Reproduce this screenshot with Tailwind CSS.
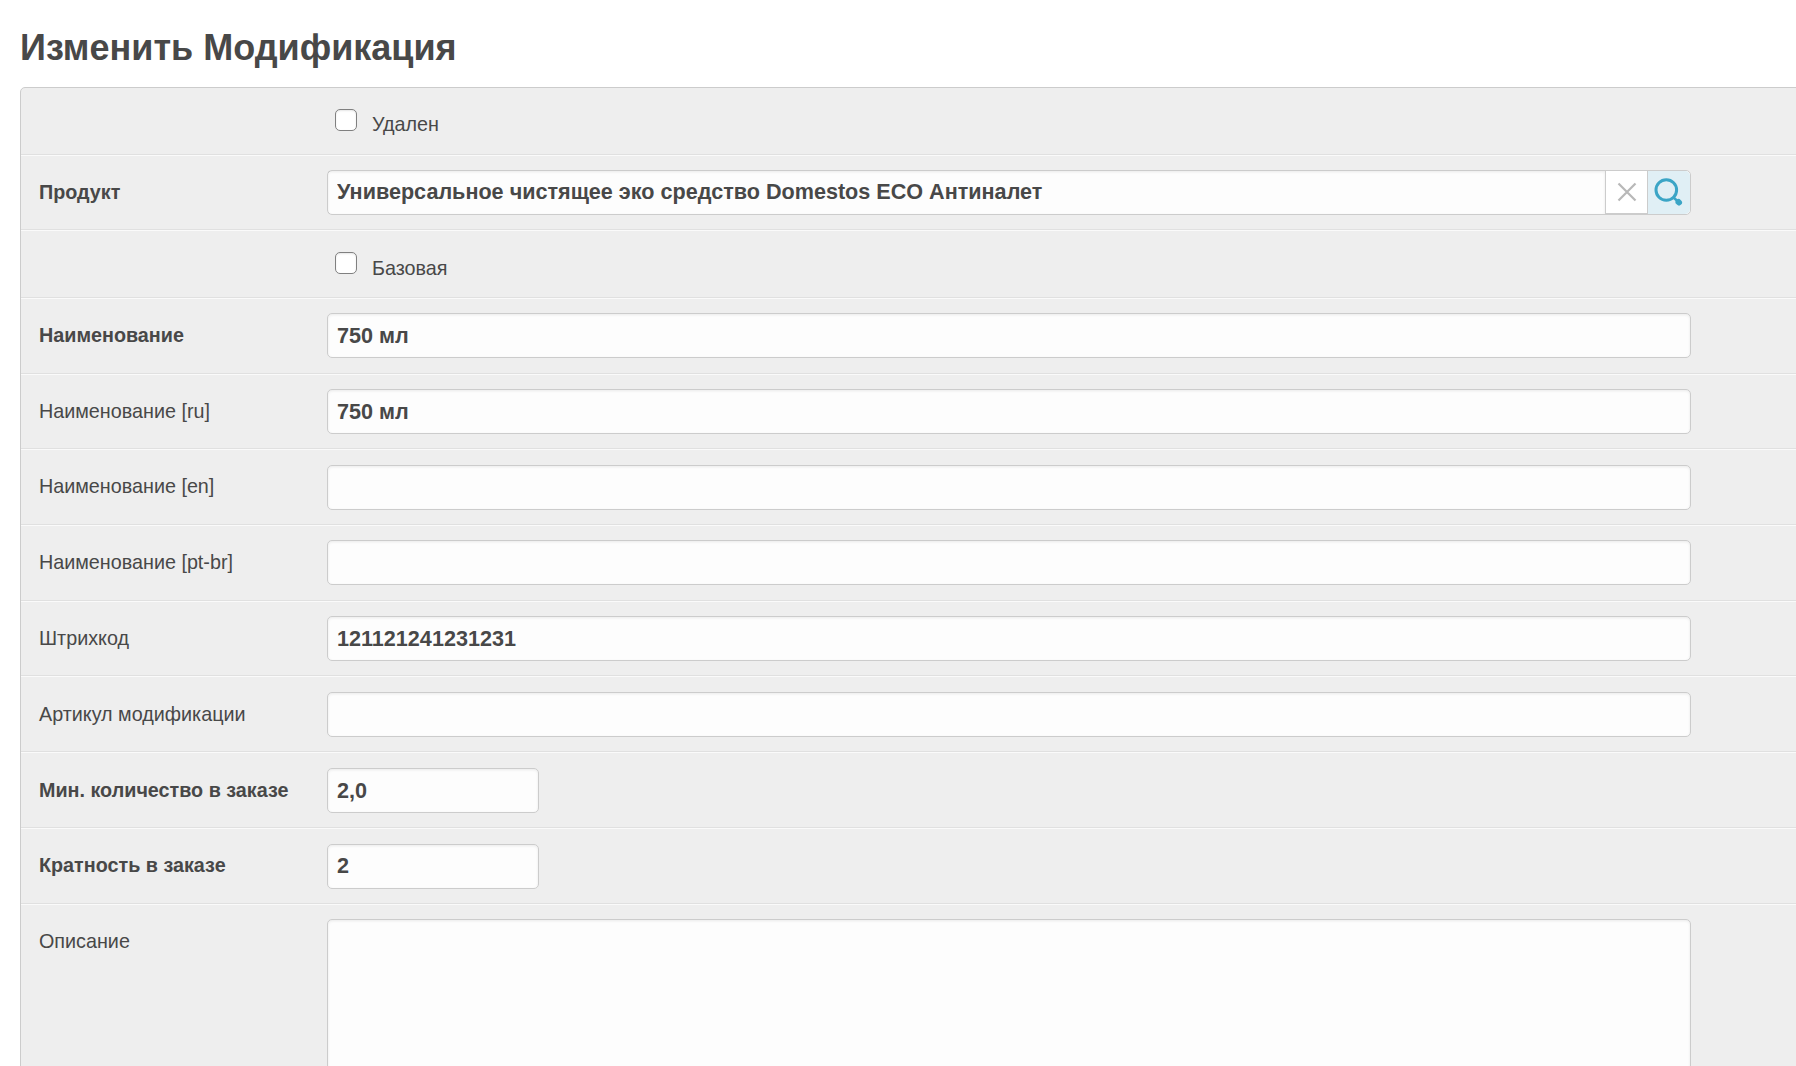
<!DOCTYPE html>
<html lang="ru">
<head>
    <meta charset="UTF-8">
    <title>Изменить Модификация</title>
    <script src="https://cdn.jsdelivr.net/npm/@tailwindcss/browser@4"></script>
</head>
<body class="h-screen overflow-hidden bg-white font-['Liberation_Sans',Arial,sans-serif] text-[#484848] text-[19.750px]">
    <h1 class="pl-[20px] h-[87px] pt-[26px] text-[36px] leading-[44px] font-bold">Изменить Модификация</h1>
    <form class="ml-[20px] w-[1800px] bg-[#eee] border border-[#ccc] rounded-tl-[5px]">
        <!-- checkbox row -->
        <div class="h-[67px] pl-[314px] flex items-center gap-[15px] border-b border-b-[#e0e0e0] shadow-[0_1px_0_#fafafa]">
            <input type="checkbox" class="appearance-none w-[22px] h-[22px] -mt-[2px] bg-white border border-[#808080] rounded-[5px] shadow-[inset_0_1px_2px_rgba(0,0,0,0.1)]">
            <label class="pt-[8px]">Удален</label>
        </div>
        <div class="h-[75px] px-[18px] flex items-center border-b border-b-[#e0e0e0] shadow-[0_1px_0_#fafafa]">
            <label class="w-[288px] pt-[2px] font-bold">Продукт</label>
            <div class="w-[1364px] h-[45px] flex bg-[#fdfdfd] border border-[#ccc] rounded-[5px]">
                <input type="text" value="Универсальное чистящее эко средство Domestos ECO Антиналет" class="flex-1 min-w-0 px-[9px] text-[21.600px] font-bold outline-none bg-transparent shadow-[inset_0_1px_3px_rgba(0,0,0,0.08)]">
                <span class="w-[43px] flex items-center justify-center bg-white border-l border-b border-r border-[#ccc]">
                    <svg width="20" height="20" viewBox="0 0 20 20" fill="none" stroke="#b8b8b8" stroke-width="2.200"><path d="M1.500 1.500l17 17M18.500 1.500l-17 17"/></svg>
                </span>
                <span class="w-[42px] flex items-center justify-center bg-[#e0eff5] rounded-r-[5px]">
                    <svg width="30" height="30" viewBox="0 0 30 30" fill="none" stroke="#3ba5c6" stroke-linecap="round"><circle cx="12.300" cy="13" r="10.300" stroke-width="3"/><path d="M19.500 20.500l5 4.500" stroke-width="2.500"/><path d="M24.500 25l.5.500" stroke-width="6"/></svg>
                </span>
            </div>
        </div>
        <div class="h-[68px] pl-[314px] flex items-center gap-[15px] border-b border-b-[#e0e0e0] shadow-[0_1px_0_#fafafa]">
            <input type="checkbox" class="appearance-none w-[22px] h-[22px] -mt-[1px] bg-white border border-[#808080] rounded-[5px] shadow-[inset_0_1px_2px_rgba(0,0,0,0.1)]">
            <label class="pt-[10px]">Базовая</label>
        </div>
        <!-- text rows -->
        <div class="h-[75.700px] px-[18px] pt-[1px] flex items-center border-b border-b-[#e0e0e0] shadow-[0_1px_0_#fafafa]">
            <label class="w-[288px] font-bold">Наименование</label>
            <input type="text" value="750 мл" class="w-[1364px] h-[45px] px-[9px] pt-[1px] text-[21.600px] font-bold bg-[#fdfdfd] border border-[#ccc] rounded-[5px] outline-none shadow-[inset_0_1px_3px_rgba(0,0,0,0.08)]">
        </div>
        <div class="h-[75.700px] px-[18px] pt-[1px] flex items-center border-b border-b-[#e0e0e0] shadow-[0_1px_0_#fafafa]">
            <label class="w-[288px]">Наименование [ru]</label>
            <input type="text" value="750 мл" class="w-[1364px] h-[45px] px-[9px] text-[21.600px] font-bold bg-[#fdfdfd] border border-[#ccc] rounded-[5px] outline-none shadow-[inset_0_1px_3px_rgba(0,0,0,0.08)]">
        </div>
        <div class="h-[75.700px] px-[18px] pt-[1px] flex items-center border-b border-b-[#e0e0e0] shadow-[0_1px_0_#fafafa]">
            <label class="w-[288px]">Наименование [en]</label>
            <input type="text" class="w-[1364px] h-[45px] px-[9px] text-[21.600px] font-bold bg-[#fdfdfd] border border-[#ccc] rounded-[5px] outline-none shadow-[inset_0_1px_3px_rgba(0,0,0,0.08)]">
        </div>
        <div class="h-[75.700px] px-[18px] pt-[1px] flex items-center border-b border-b-[#e0e0e0] shadow-[0_1px_0_#fafafa]">
            <label class="w-[288px]">Наименование [pt-br]</label>
            <input type="text" class="w-[1364px] h-[45px] px-[9px] text-[21.600px] font-bold bg-[#fdfdfd] border border-[#ccc] rounded-[5px] outline-none shadow-[inset_0_1px_3px_rgba(0,0,0,0.08)]">
        </div>
        <div class="h-[75.700px] px-[18px] pt-[1px] flex items-center border-b border-b-[#e0e0e0] shadow-[0_1px_0_#fafafa]">
            <label class="w-[288px]">Штрихкод</label>
            <input type="text" value="121121241231231" class="w-[1364px] h-[45px] px-[9px] text-[21.600px] font-bold bg-[#fdfdfd] border border-[#ccc] rounded-[5px] outline-none shadow-[inset_0_1px_3px_rgba(0,0,0,0.08)]">
        </div>
        <div class="h-[75.700px] px-[18px] pt-[2px] flex items-center border-b border-b-[#e0e0e0] shadow-[0_1px_0_#fafafa]">
            <label class="w-[288px]">Артикул модификации</label>
            <input type="text" class="w-[1364px] h-[45px] px-[9px] text-[21.600px] font-bold bg-[#fdfdfd] border border-[#ccc] rounded-[5px] outline-none shadow-[inset_0_1px_3px_rgba(0,0,0,0.08)]">
        </div>
        <div class="h-[75.700px] px-[18px] pt-[3px] flex items-center border-b border-b-[#e0e0e0] shadow-[0_1px_0_#fafafa]">
            <label class="w-[288px] font-bold">Мин. количество в заказе</label>
            <input type="text" value="2,0" class="w-[212px] h-[45px] px-[9px] text-[21.600px] font-bold bg-[#fdfdfd] border border-[#ccc] rounded-[5px] outline-none shadow-[inset_0_1px_3px_rgba(0,0,0,0.08)]">
        </div>
        <div class="h-[75.700px] px-[18px] pt-[3px] flex items-center border-b border-b-[#e0e0e0] shadow-[0_1px_0_#fafafa]">
            <label class="w-[288px] pb-[2px] font-bold">Кратность в заказе</label>
            <input type="text" value="2" class="w-[212px] h-[45px] px-[9px] pb-[2px] text-[21.600px] font-bold bg-[#fdfdfd] border border-[#ccc] rounded-[5px] outline-none shadow-[inset_0_1px_3px_rgba(0,0,0,0.08)]">
        </div>
        <div class="h-[300px] px-[18px] pt-[15px] flex items-start">
            <label class="w-[288px] pt-[8px]">Описание</label>
            <textarea class="w-[1364px] h-[260px] px-[9px] bg-[#fdfdfd] border border-[#ccc] rounded-[5px] outline-none resize-none shadow-[inset_0_1px_3px_rgba(0,0,0,0.08)]"></textarea>
        </div>
    </form>
</body>
</html>
